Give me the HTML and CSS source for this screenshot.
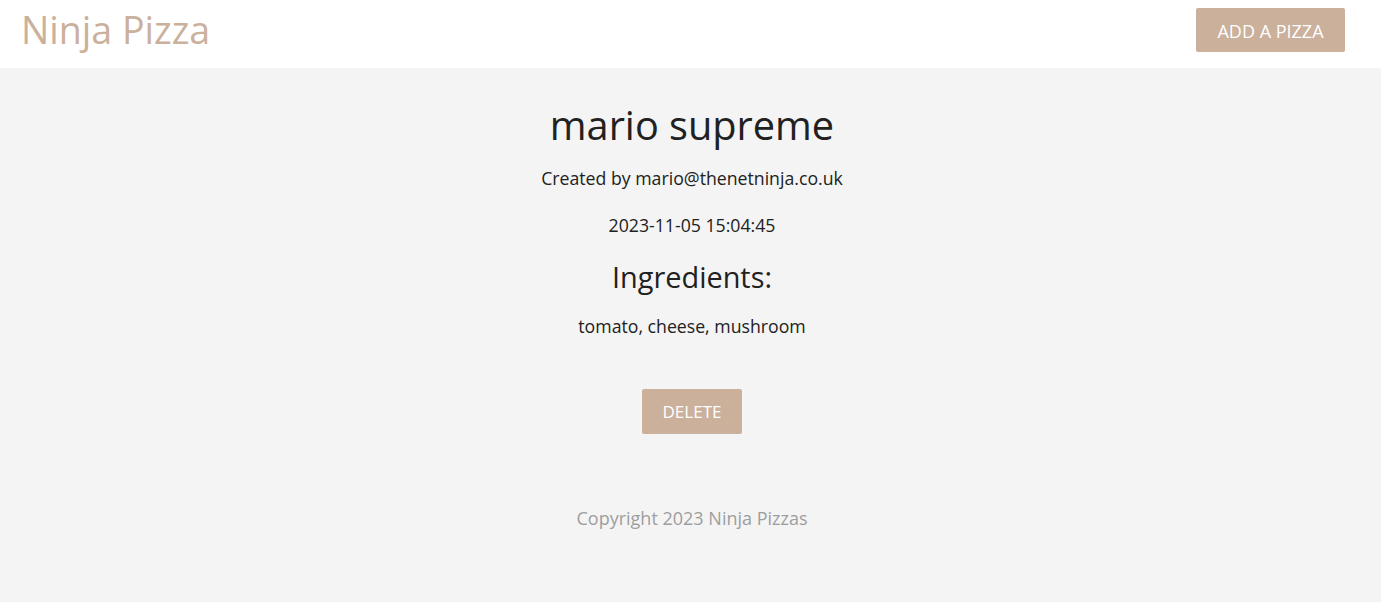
FILE: index.html
```html
<!DOCTYPE html>
<html lang="en">
<head>
<meta charset="utf-8">
<title>Ninja Pizza</title>
<link rel="stylesheet" href="styles.css">
</head>
<body>
<header class="nav">
  <a class="brand" href="#">Ninja Pizza</a>
  <a class="btn btn-add" href="#">ADD A PIZZA</a>
</header>
<main class="details">
  <h1 class="title">mario supreme</h1>
  <p class="meta meta-created">Created by mario@thenetninja.co.uk</p>
  <p class="meta meta-date">2023-11-05 15:04:45</p>
  <h2 class="sub">Ingredients:</h2>
  <p class="meta meta-ing">tomato, cheese, mushroom</p>
  <button class="btn btn-delete">DELETE</button>
</main>
<footer class="footer">Copyright 2023 Ninja Pizzas</footer>
</body>
</html>
```
FILE: styles.css
```css
html, body {
  margin: 0;
  padding: 0;
  height: 100%;
}
body {
  background: #f4f4f4;
  font-family: "Open Sans", "Noto Sans", sans-serif;
  color: #212121;
}
.nav {
  background: #fff;
  height: 68px;
  display: flex;
  align-items: center;
  justify-content: space-between;
  padding: 0 36px 0 21px;
}
.brand {
  color: #cbb09c;
  font-size: 37.6px;
  text-decoration: none;
  line-height: 1;
  margin-top: -8px;
}
.btn {
  background: #cbb09c;
  color: #fff;
  border: none;
  border-radius: 2px;
  font-family: inherit;
  text-decoration: none;
  display: inline-flex;
  align-items: center;
  justify-content: center;
}
.btn-add {
  width: 149px;
  height: 44px;
  font-size: 18px;
  margin-top: -8px;
  padding-top: 2px;
  box-sizing: border-box;
}
.details {
  display: flex;
  flex-direction: column;
  align-items: center;
  padding: 33px 0 0 3px;
}
.title {
  font-size: 39.7px;
  font-weight: 400;
  line-height: 48px;
  margin: 0;
}
.meta {
  font-size: 17.7px;
  line-height: 24px;
  margin: 0;
}
.meta-created { margin-top: 17px; }
.meta-date { margin-top: 23px; }
.sub {
  font-size: 28.9px;
  font-weight: 400;
  line-height: 40px;
  margin: 20px 0 0;
}
.meta-ing { margin-top: 17px; }
.btn-delete {
  width: 100px;
  height: 45px;
  font-size: 17px;
  margin-top: 51px;
}
.footer {
  text-align: center;
  color: #9e9e9e;
  font-size: 18px;
  line-height: 24px;
  margin-top: 72px;
  padding-left: 3px;
}
```
